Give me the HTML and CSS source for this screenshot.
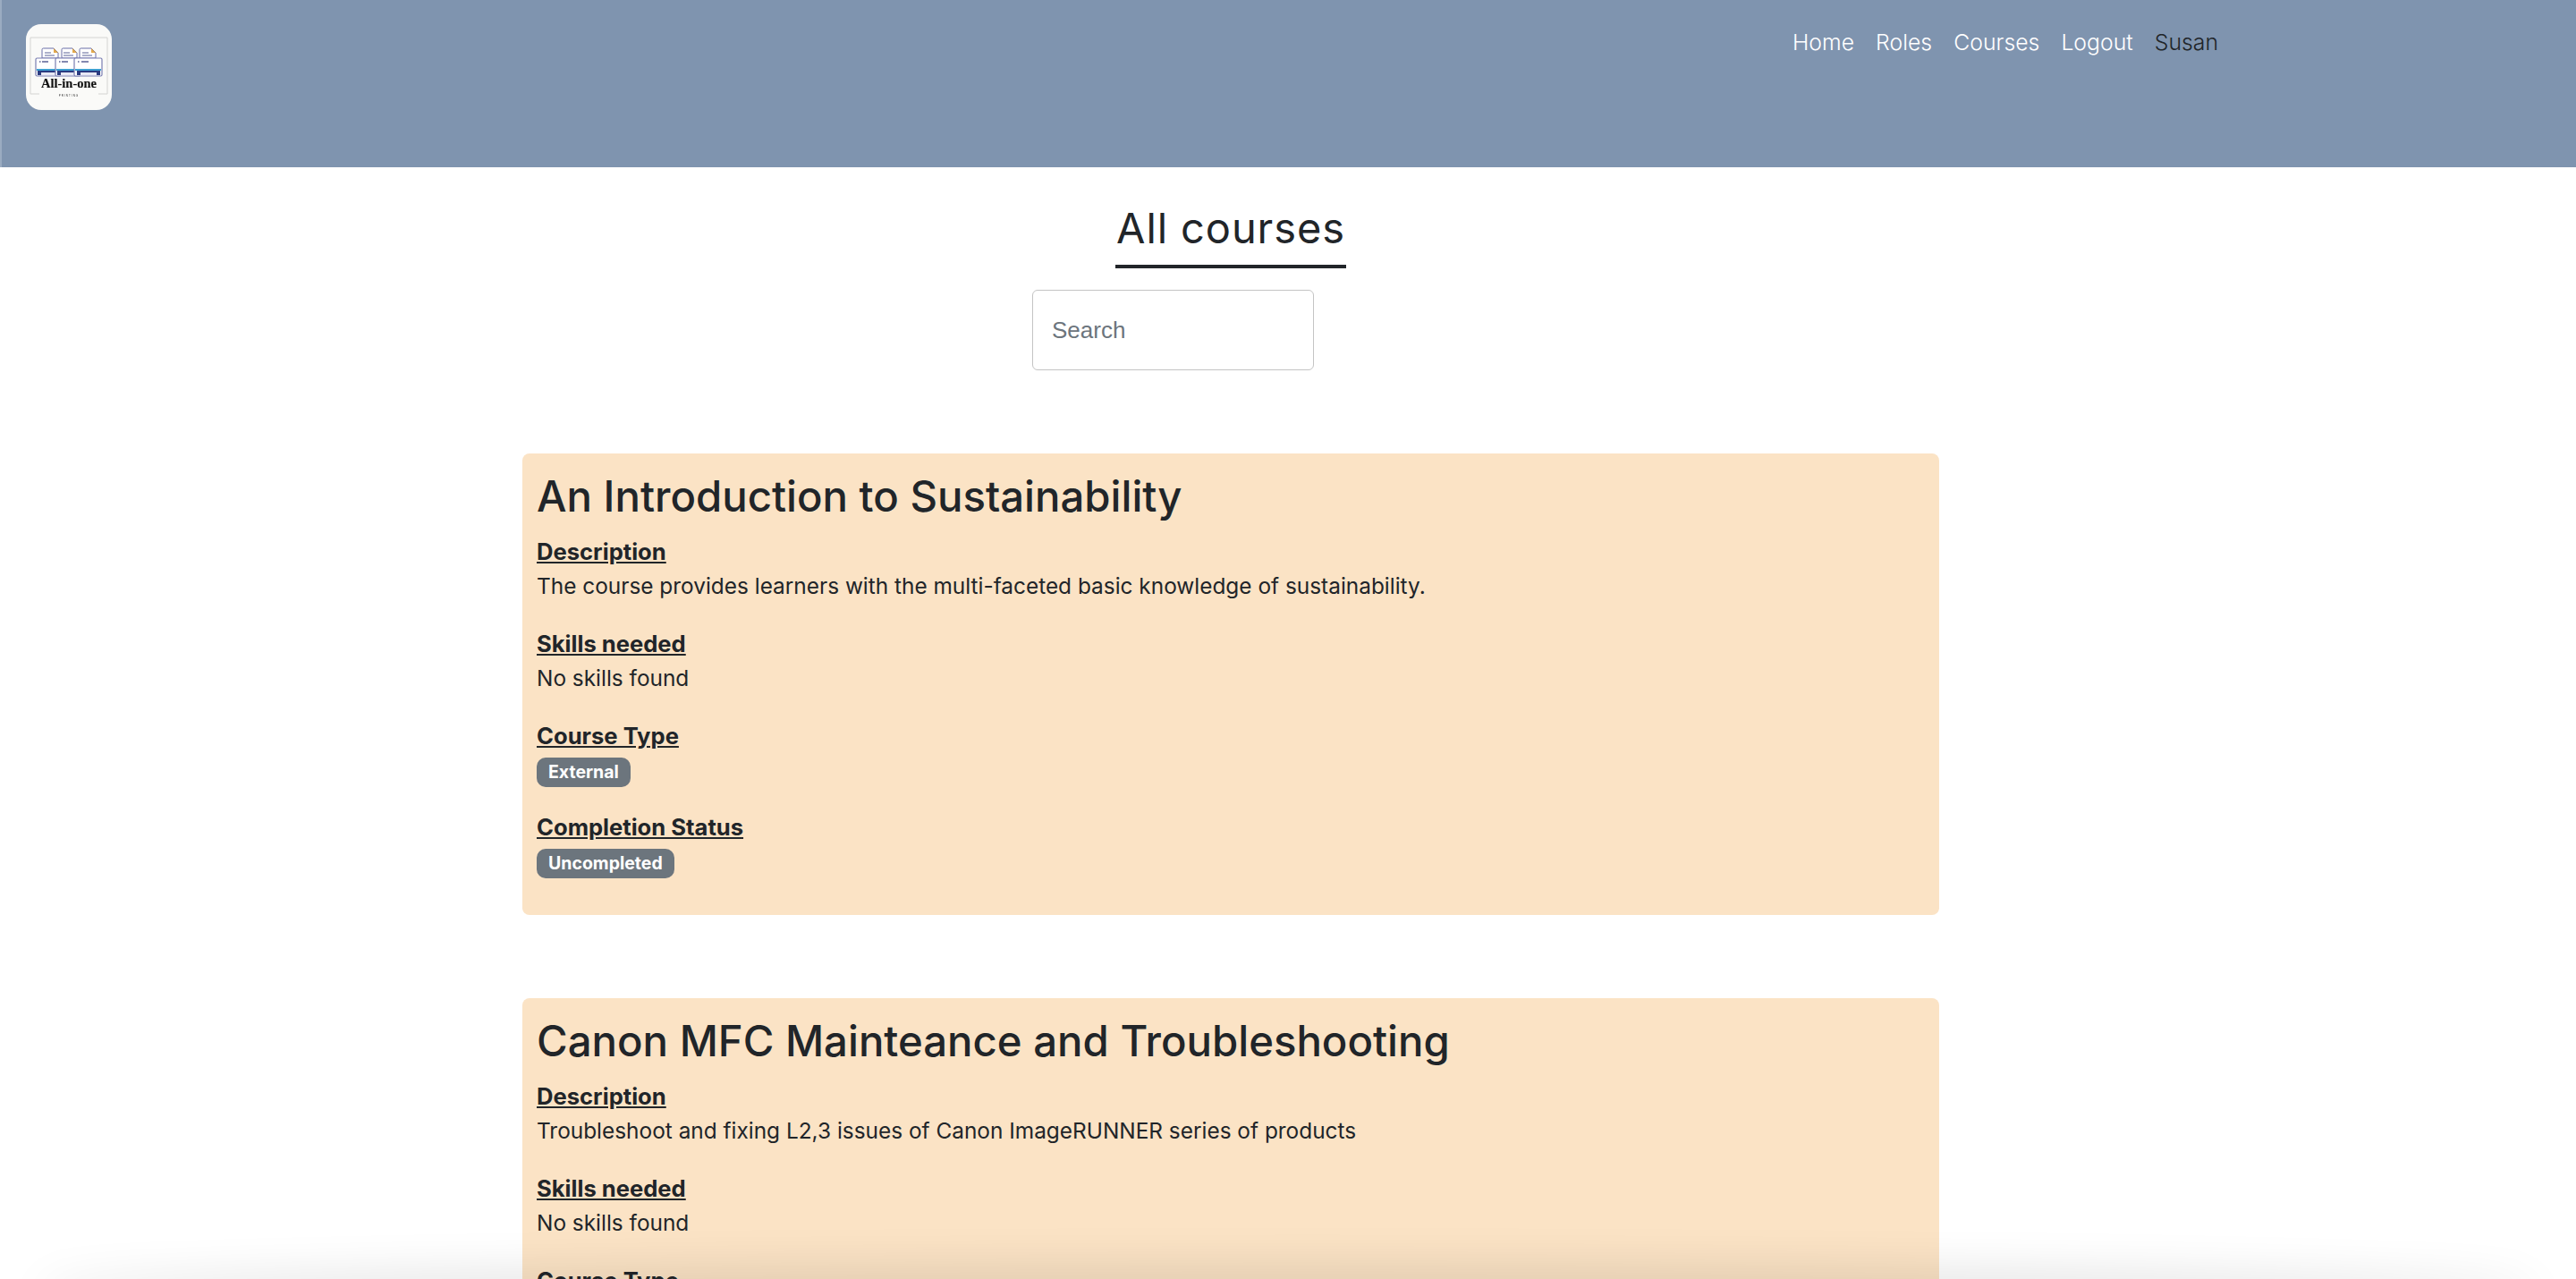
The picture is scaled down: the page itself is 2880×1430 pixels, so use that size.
FILE: index.html
```html
<!DOCTYPE html>
<html lang="en">
<head>
<meta charset="utf-8">
<title>All courses</title>
<link rel="stylesheet" href="styles.css">
</head>
<body>
<header class="topbar">
  <a class="brand" href="#">
    <svg class="logo" viewBox="0 0 96 96" width="96" height="96">
      <rect width="96" height="96" rx="17" fill="#fafaf8"/>
      <path d="M5 78V15H91V78" fill="none" stroke="#d4d4d2" stroke-width="1"/>
      <rect x="14" y="78" width="68" height="3" fill="#fafaf8"/>
      <path d="M5 78H15M81 78H91" stroke="#d4d4d2" stroke-width="1"/>
      <g>
        <path d="M18 30V28.5a1.5 1.5 0 0 1 1.5-1.5H31l5 5v6H18z" fill="#fff" stroke="#6a6ea8" stroke-width="1"/>
        <path d="M31 27l5 5h-5z" fill="#e2a94c"/>
        <path d="M21 32h7M21 35h11" stroke="#5b6296" stroke-width="1"/>
        <rect x="11" y="38" width="28" height="20" rx="1.5" fill="#fff" stroke="#7a7eb2" stroke-width="1.2"/>
        <path d="M15 42h1.5M18 42h7" stroke="#5b6296" stroke-width="1.4"/>
        <rect x="12" y="50" width="26" height="2" fill="#3d9fd0"/>
        <rect x="13" y="52" width="24" height="5" fill="#2b3b80"/>
        <rect x="17" y="54" width="16" height="3" fill="#e8e8f4"/>
      </g>
      <g>
        <path d="M40 30V28.5a1.5 1.5 0 0 1 1.5-1.5H52l5 5v6H40z" fill="#fff" stroke="#6a6ea8" stroke-width="1"/>
        <path d="M52 27l5 5h-5z" fill="#e2a94c"/>
        <path d="M42 32h7M42 35h11" stroke="#5b6296" stroke-width="1"/>
        <rect x="33" y="38" width="28" height="20" rx="1.5" fill="#fff" stroke="#7a7eb2" stroke-width="1.2"/>
        <path d="M37 42h1.500M40 42h7" stroke="#5b6296" stroke-width="1.4"/>
        <rect x="34" y="50" width="26" height="2" fill="#3d9fd0"/>
        <rect x="35" y="52" width="24" height="5" fill="#2b3b80"/>
        <rect x="39" y="54" width="16" height="3" fill="#e8e8f4"/>
      </g>
      <g>
        <path d="M60 30V28.5a1.500 1.500 0 0 1 1.500-1.500H73l5 5v6H60z" fill="#fff" stroke="#6a6ea8" stroke-width="1"/>
        <path d="M73 27l5 5h-5z" fill="#e2a94c"/>
        <path d="M63 32h7M63 35h11" stroke="#5b6296" stroke-width="1"/>
        <rect x="54" y="38" width="31" height="20" rx="1.500" fill="#fff" stroke="#7a7eb2" stroke-width="1.200"/>
        <path d="M58 42h1.500M62 42h8" stroke="#5b6296" stroke-width="1.400"/>
        <rect x="55" y="50" width="29" height="2" fill="#3d9fd0"/>
        <rect x="57" y="52" width="26" height="5" fill="#2b3b80"/>
        <rect x="61" y="54" width="18" height="3" fill="#e8e8f4"/>
      </g>
      <text class="logo-name" x="48" y="71" text-anchor="middle">All-in-one</text>
      <text class="logo-sub" x="48" y="80.500" text-anchor="middle">PRINTING</text>
    </svg>
  </a>
  <nav class="nav">
    <a class="nav-link" href="#">Home</a>
    <a class="nav-link" href="#">Roles</a>
    <a class="nav-link" href="#">Courses</a>
    <a class="nav-link" href="#">Logout</a>
    <span class="nav-user">Susan</span>
  </nav>
</header>
<main class="content">
  <div class="title-row"><h1 class="page-title">All courses</h1></div>
  <div class="search-row"><input class="search" type="text" placeholder="Search"></div>
  <section class="cards">
    <article class="card">
      <h2 class="card-title">An Introduction to Sustainability</h2>
      <div class="field"><h3 class="label">Description</h3><p class="value">The course provides learners with the multi-faceted basic knowledge of sustainability.</p></div>
      <div class="field"><h3 class="label">Skills needed</h3><p class="value">No skills found</p></div>
      <div class="field"><h3 class="label">Course Type</h3><span class="badge">External</span></div>
      <div class="field"><h3 class="label">Completion Status</h3><span class="badge">Uncompleted</span></div>
    </article>
    <article class="card">
      <h2 class="card-title">Canon MFC Mainteance and Troubleshooting</h2>
      <div class="field"><h3 class="label">Description</h3><p class="value">Troubleshoot and fixing L2,3 issues of Canon ImageRUNNER series of products</p></div>
      <div class="field"><h3 class="label">Skills needed</h3><p class="value">No skills found</p></div>
      <div class="field"><h3 class="label">Course Type</h3><span class="badge">External</span></div>
      <div class="field"><h3 class="label">Completion Status</h3><span class="badge">Uncompleted</span></div>
    </article>
  </section>
</main>
<div class="window-shadow"></div>
</body>
</html>
```
FILE: styles.css
```css
* { box-sizing: border-box; }
html { overflow: hidden; height: 100%; }
body {
  margin: 0;
  height: 100%;
  overflow: hidden;
  background: #fff;
  color: #212529;
  font-family: Inter, "Liberation Sans", sans-serif;
  font-size: 24.400px;
  line-height: 39px;
}
.topbar {
  height: 187px;
  background: #7f94af;
  border-left: 2px solid #9aabc1;
  display: flex;
  align-items: flex-start;
  padding: 27px 0 0 27px;
}
.brand { display: block; width: 96px; height: 96px; }
.logo { display: block; filter: blur(0.4px); }
.logo-name { font-family: "Liberation Serif", serif; font-weight: 700; font-size: 14.500px; fill: #111; stroke: #111; stroke-width: 0.15; }
.logo-sub { font-family: "Liberation Sans", sans-serif; font-size: 3px; letter-spacing: 1px; fill: #333; }
.nav {
  margin-left: 1879px;
  margin-top: 1px;
  display: flex;
  gap: 24px;
  font-size: 24.800px;
}
.nav-link { color: #fff; text-decoration: none; font-weight: 350; }
.nav-user { color: #212529; font-weight: 350; }
.content { width: 1584px; margin-left: 584px; }
.title-row { display: flex; justify-content: center; padding-top: 37px; }
.page-title {
  margin: 0;
  font-family: Inter, sans-serif;
  font-weight: 400;
  font-size: 47px;
  line-height: 62px;
  letter-spacing: 0.900px;
  border-bottom: 4px solid #212529;
  padding: 0 1px 10px;
}
.search-row { padding: 24px 0 0 570px; }
.search {
  display: block;
  width: 315px;
  height: 90px;
  border: 1px solid #c4c4c4;
  border-radius: 6px;
  background: #fff;
  padding: 0 21px;
  font-family: "Liberation Sans", Inter, sans-serif;
  font-size: 26px;
  color: #212529;
}
.search::placeholder { color: #6c757d; opacity: 1; }
.cards {
  margin-top: 93px;
  display: flex;
  flex-direction: column;
  gap: 93px;
}
.card {
  background: #fbe3c5;
  border-radius: 8px;
  padding: 17px 16px 16px;
  height: 516px;
  flex: none;
}
.card-title {
  margin: 0 0 11px;
  font-size: 47.300px;
  line-height: 62px;
  font-weight: 500;
}
.field { margin-bottom: 25px; }
.label {
  margin: 0;
  font-size: 25.600px;
  line-height: 39px;
  font-weight: 700;
  text-decoration: underline;
}
.value { margin: 0; line-height: 39px; font-weight: 400; }
.badge {
  display: block;
  width: fit-content;
  margin: 5px 0 2px;
  background: #6c757d;
  color: #fff;
  font-size: 19.500px;
  font-weight: 700;
  line-height: 21px;
  padding: 6px 13px;
  border-radius: 10px;
}
.window-shadow {
  position: fixed;
  left: 60px;
  right: 60px;
  bottom: -24px;
  height: 20px;
  border-radius: 50%;
  box-shadow: 0 0 50px 18px rgba(0, 0, 0, 0.11);
}
```
